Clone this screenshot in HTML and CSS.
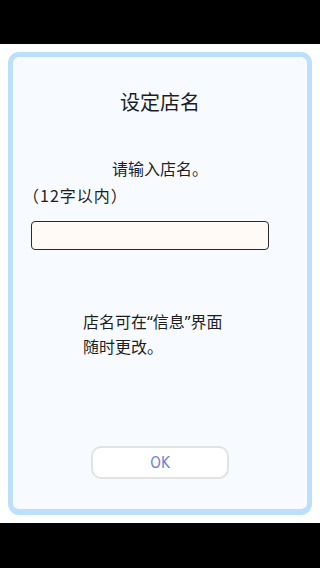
FILE: index.html
```html
<!DOCTYPE html>
<html lang="zh-CN">
<head>
    <meta charset="UTF-8">
    <meta name="viewport" content="width=device-width, initial-scale=1.0">
    <title>设定店名</title>
    <link rel="stylesheet" href="styles.css">
</head>
<body>
    <div id="app">
        <div class="topbar"></div>

        <div class="screen">
            <div class="dialog">
                <h1 class="title">设定店名</h1>
                <p class="prompt">请输入店名。</p>
                <p class="limit">（12字以内）</p>
                <input type="text" class="shop-name" maxlength="12">
                <p class="note">店名可在“信息”界面<br>随时更改。</p>
                <button class="ok">OK</button>
            </div>
        </div>

        <div class="navbar"></div>
    </div>
</body>
</html>
```

FILE: styles.css
```css
body {
    margin: 0;
    padding: 0;
    background-color: #000;
    font-family: "Noto Sans CJK SC", "Noto Sans", sans-serif;
    color: #1e1e1e;
}

#app {
    width: 320px;
    height: 568px;
    display: flex;
    flex-direction: column;
}

.topbar {
    height: 44px;
    background-color: #000;
}

.screen {
    height: 479px;
    box-sizing: border-box;
    padding: 8px;
    background-color: #fff;
}

.navbar {
    flex: 1;
    background-color: #000;
}

.dialog {
    height: 100%;
    box-sizing: border-box;
    border: 5px solid #bcdffc;
    border-bottom-width: 6px;
    border-radius: 11px;
    background-color: #f7fbff;
    display: flex;
    flex-direction: column;
}

.title {
    margin: 32px 0 0;
    font-size: 20px;
    font-weight: normal;
    line-height: 26px;
    text-align: center;
}

.prompt {
    margin: 42px 0 0;
    font-size: 16px;
    line-height: 22px;
    text-align: center;
}

.limit {
    margin: 5px 0 0 10px;
    font-size: 16px;
    line-height: 22px;
    letter-spacing: 1px;
}

.shop-name {
    margin: 15px 0 0 18px;
    width: 238px;
    height: 29px;
    box-sizing: border-box;
    border: 1px solid #2a2a2a;
    border-radius: 4px;
    background-color: #fffaf5;
    outline: none;
}

.note {
    margin: 60px 0 0 70px;
    font-family: "Noto Sans", "Noto Sans CJK SC", sans-serif;
    font-size: 16px;
    line-height: 25px;
}

.ok {
    margin: 86px auto 0;
    width: 138px;
    height: 33px;
    border: 2px solid #e2e2e2;
    border-radius: 10px;
    background-color: #fff;
    color: #6a7fd6;
    font-family: "DejaVu Sans Condensed", "DejaVu Sans", sans-serif;
    font-size: 15px;
    padding: 0;
}
```
